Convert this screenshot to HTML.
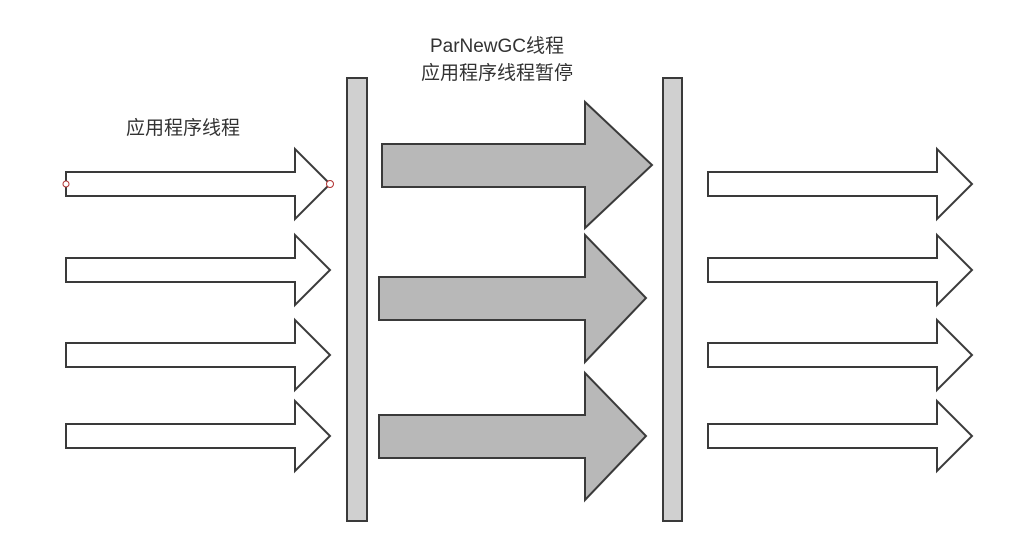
<!DOCTYPE html>
<html><head><meta charset="utf-8"><style>
html,body{margin:0;padding:0;background:#fff;}
svg{display:block;}
text{font-family:"Liberation Sans","Noto Sans CJK SC",sans-serif;font-size:19px;fill:#333;}
</style></head><body>
<svg width="1030" height="545" viewBox="0 0 1030 545" xmlns="http://www.w3.org/2000/svg">
<g stroke="#3a3a3a" stroke-width="2" stroke-linejoin="miter">
<rect x="347" y="78" width="20" height="443" fill="#d0d0d0"/>
<rect x="663" y="78" width="19" height="443" fill="#d0d0d0"/>
<g fill="#fff">
<polygon points="66,172 295,172 295,149 330,184 295,219 295,196 66,196"/>
<polygon points="66,258 295,258 295,235 330,270 295,305 295,282 66,282"/>
<polygon points="66,343 295,343 295,320 330,355 295,390 295,367 66,367"/>
<polygon points="66,424 295,424 295,401 330,436 295,471 295,448 66,448"/>
<polygon points="708,172 937,172 937,149 972,184 937,219 937,196 708,196"/>
<polygon points="708,258 937,258 937,235 972,270 937,305 937,282 708,282"/>
<polygon points="708,343 937,343 937,320 972,355 937,390 937,367 708,367"/>
<polygon points="708,424 937,424 937,401 972,436 937,471 937,448 708,448"/>
</g>
<g fill="#b8b8b8">
<polygon points="382,144 585,144 585,102 652,165 585,228 585,187 382,187"/>
<polygon points="379,277 585,277 585,235 646,298 585,362 585,320 379,320"/>
<polygon points="379,415 585,415 585,373 646,436 585,500 585,458 379,458"/>
</g>
</g>
<circle cx="66" cy="184" r="3" fill="#fff" stroke="#b03030" stroke-width="1"/>
<circle cx="330" cy="184" r="3.5" fill="#fff" stroke="#b03030" stroke-width="1"/>
<text x="497" y="52" text-anchor="middle">ParNewGC线程</text>
<text x="497" y="79" text-anchor="middle">应用程序线程暂停</text>
<text x="183" y="134" text-anchor="middle">应用程序线程</text>
</svg>
</body></html>
